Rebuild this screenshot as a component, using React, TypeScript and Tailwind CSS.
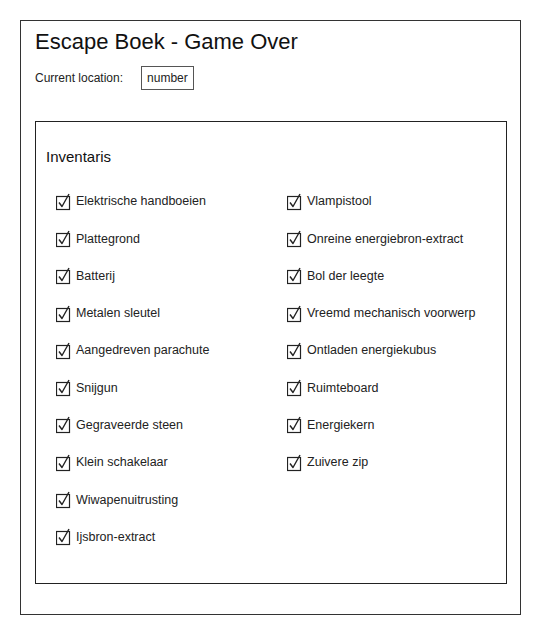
import React from 'react';

const leftItems = [
  'Elektrische handboeien',
  'Plattegrond',
  'Batterij',
  'Metalen sleutel',
  'Aangedreven parachute',
  'Snijgun',
  'Gegraveerde steen',
  'Klein schakelaar',
  'Wiwapenuitrusting',
  'Ijsbron-extract',
];

const rightItems = [
  'Vlampistool',
  'Onreine energiebron-extract',
  'Bol der leegte',
  'Vreemd mechanisch voorwerp',
  'Ontladen energiekubus',
  'Ruimteboard',
  'Energiekern',
  'Zuivere zip',
];

const CheckIcon: React.FC = () => (
  <svg width="16" height="18" viewBox="0 0 16 18" className="shrink-0">
    <rect x="0.5" y="3.5" width="13" height="13" fill="none" stroke="#222" strokeWidth="1.2" />
    <path d="M3 9.5 L6 13.5 L13 1" fill="none" stroke="#222" strokeWidth="1.4" strokeLinejoin="round" />
  </svg>
);

const Item: React.FC<{ label: string }> = ({ label }) => (
  <div className="h-[37.3px] flex items-center gap-[4px]">
    <CheckIcon />
    <span className="text-[12.5px] text-[#222]">{label}</span>
  </div>
);

const App: React.FC = () => {
  return (
    <div
      className="w-[540px] h-[634px] bg-white pt-[20px] pl-[20px]"
      style={{ fontFamily: '"Comic Sans MS", "Liberation Sans", sans-serif' }}
    >
      <div className="w-[501px] h-[595px] border border-[#333] pt-[6px] px-[14px]">
        <h1 className="text-[22px] text-[#111] leading-[30px]">Escape Boek - Game Over</h1>
        <div className="flex items-center mt-[9px] gap-[18px]">
          <span className="text-[12px] text-[#222]">Current location:</span>
          <div className="border border-[#555] h-[24px] px-[5px] flex items-center text-[12px] text-[#222]">
            number
          </div>
        </div>
        <div className="mt-[31px] w-[472px] h-[463px] border border-[#222] pt-[24px] pl-[10px]">
          <h2 className="text-[15px] text-[#111] leading-[22px]">Inventaris</h2>
          <div className="flex mt-[15px] pl-[10px]">
            <div className="w-[231px] flex flex-col">
              {leftItems.map((l) => (
                <Item key={l} label={l} />
              ))}
            </div>
            <div className="flex flex-col">
              {rightItems.map((l) => (
                <Item key={l} label={l} />
              ))}
            </div>
          </div>
        </div>
      </div>
    </div>
  );
};

export default App;
